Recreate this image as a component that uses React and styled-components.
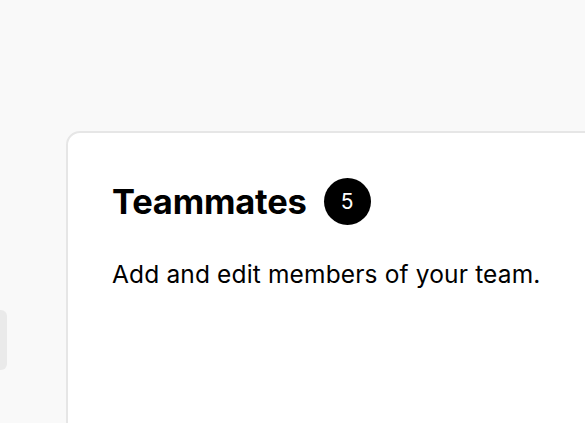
import React from 'react';
import styled, { createGlobalStyle } from 'styled-components';

const GlobalStyle = createGlobalStyle`
  html, body {
    margin: 0;
    padding: 0;
    background: #f9f9f9;
    font-family: Inter, "Noto Sans", sans-serif;
    overflow: hidden;
  }
`;

const Page = styled.div`
  display: flex;
  align-items: flex-start;
  width: 585px;
  height: 423px;
  overflow: hidden;
  background: #f9f9f9;
`;

const SideTab = styled.div`
  flex: none;
  width: 7px;
  height: 60px;
  margin-top: 310px;
  background: #eaeaea;
  border-radius: 0 6px 6px 0;
`;

const Card = styled.section`
  flex: none;
  margin-top: 131px;
  margin-left: 59px;
  width: 640px;
  height: 400px;
  box-sizing: border-box;
  padding: 45px 44px;
  background: #ffffff;
  border: 2px solid #e6e6e6;
  border-radius: 14px;
`;

const Header = styled.div`
  display: flex;
  align-items: center;
  gap: 17px;
`;

const Title = styled.h2`
  margin: 0;
  font-size: 34.5px;
  font-weight: 700;
  line-height: 40px;
  color: #000;
  letter-spacing: -0.2px;
`;

const Badge = styled.span`
  display: flex;
  align-items: center;
  justify-content: center;
  width: 47px;
  height: 47px;
  border-radius: 50%;
  background: #000;
  color: #fff;
  font-size: 21px;
  font-weight: 400;
`;

const Description = styled.p`
  margin: 34px 0 0;
  font-size: 24.5px;
  line-height: 30px;
  color: #000;
  letter-spacing: 0.15px;
`;

export default function App() {
  return (
    <Page>
      <GlobalStyle />
      <SideTab />
      <Card>
        <Header>
          <Title>Teammates</Title>
          <Badge>5</Badge>
        </Header>
        <Description>Add and edit members of your team.</Description>
      </Card>
    </Page>
  );
}
